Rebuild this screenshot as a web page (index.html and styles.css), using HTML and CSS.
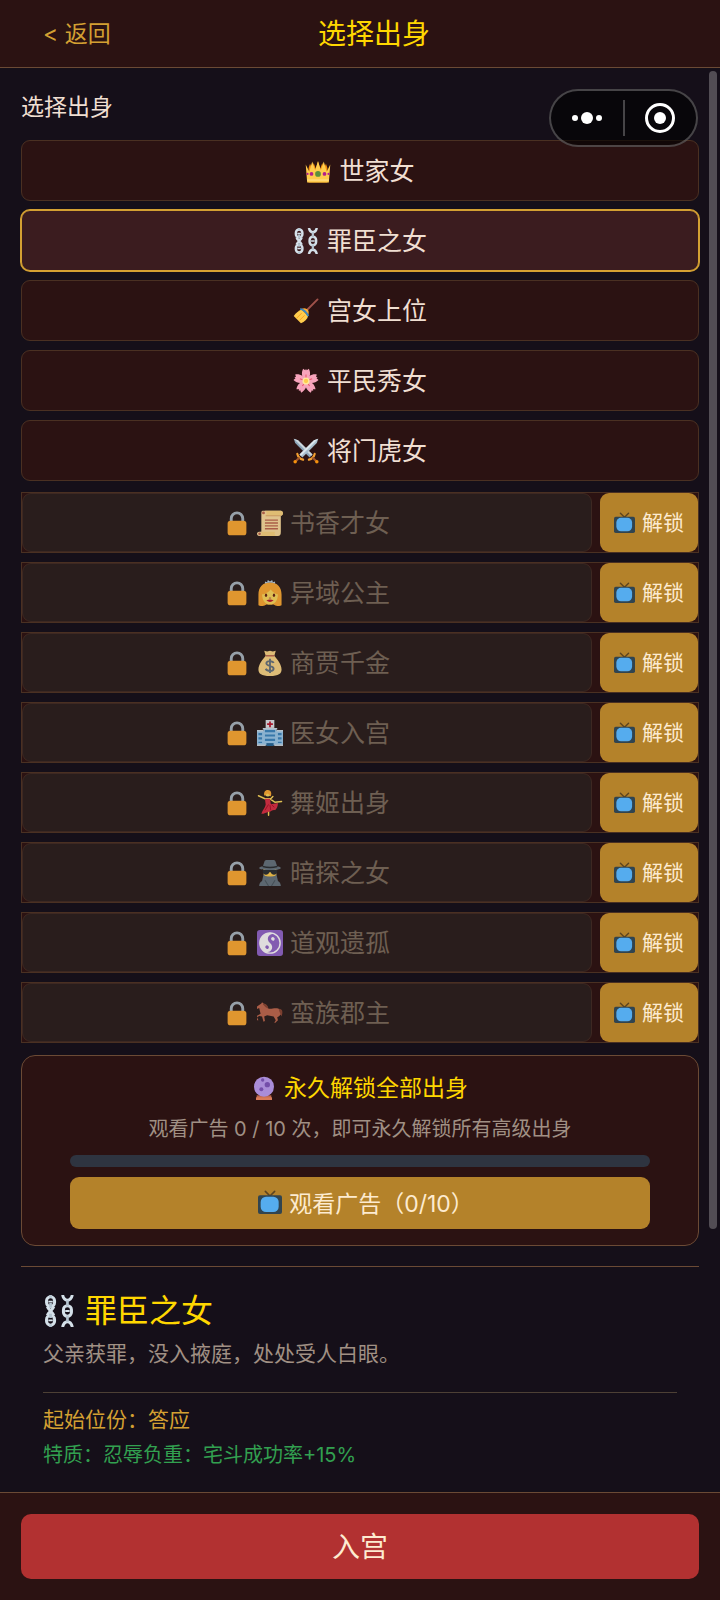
FILE: index.html
```html
<!DOCTYPE html>
<html lang="zh-CN">

<head>
  <meta charset="UTF-8" />
  <meta name="viewport" content="width=device-width, initial-scale=1" />
  <title>选择出身</title>
  <link rel="stylesheet" href="styles.css">
</head>
<body>
  <!-- icon set -->
  <svg class="sprite" aria-hidden="true">
    <symbol id="i-crown" viewBox="0 0 36 36">
      <path fill="#f4900c" d="M5 34V14l2-6 3 7 2-8 3 8 3-10 3 10 3-8 2 8 3-7 2 6v20z"/>
      <path fill="#ffcc4d" d="M3 34L1 9l5 10 4-14 4 12 4-13 4 13 4-12 4 14 5-10-2 25z"/>
      <path fill="#ffe8b6" d="M3 30h30v1H3z"/>
      <circle cx="18" cy="22" r="4" fill="#5c913b"/>
      <circle cx="9" cy="22" r="2.600" fill="#b3208c"/><circle cx="27" cy="22" r="2.600" fill="#b3208c"/>
      <circle cx="3.500" cy="22" r="1.500" fill="#b3208c"/><circle cx="32.500" cy="22" r="1.500" fill="#b3208c"/>
    </symbol>
    <symbol id="i-chains" viewBox="0 0 36 36">
      <g fill="none" stroke="#d5e1ea" stroke-width="3.400">
        <rect x="4" y="2" width="9" height="11" rx="4.500"/><rect x="4" y="23" width="9" height="11" rx="4.500"/>
        <path d="M5 13c1 4 6 6 7 10M12 13c-1 4-6 6-7 10"/>
        <rect x="23" y="12" width="9" height="12" rx="4.500"/>
        <path d="M22 0c1 4 3 6 5.500 6S32 4 33 0M22 36c1-4 3-6 5.500-6s4.500 2 5.500 6"/>
      </g>
      <path stroke="#b4c4d0" stroke-width="3" d="M8.500 0v3M8.500 9v5M8.500 21v5M8.500 33v3M27.500 6v7M27.500 23v7"/>
      <path stroke="#d5e1ea" stroke-width="2" d="M6 7.500h5M6 28.500h5M25 18h5"/>
    </symbol>
    <symbol id="i-broom" viewBox="0 0 36 36">
      <path stroke="#a0524a" stroke-width="2.600" stroke-linecap="round" d="M34 2L18 18"/>
      <path fill="#ffcc4d" d="M12 16l9 9c-1 4-5 8-10 10L1 25c3-4 7-8 11-9z"/>
      <path fill="none" stroke="#f4900c" d="M5 28l7-7M9 31l7-7"/>
      <path fill="#ffac33" d="M12 15c4-2 8 0 9 2s1 4 0 7z"/>
      <path fill="none" stroke="#3b88c3" stroke-width="2.600" d="M10 15c5 1 9 5 11 10"/>
    </symbol>
    <symbol id="i-blossom" viewBox="0 0 36 36">
      <g fill="#f7a3bb">
        <path id="petal" d="M18 18c-6-4-7-11-4-17l3 2 1-2 1 2 3-2c3 6 2 13-4 17z"/>
        <use href="#petal" transform="rotate(72 18 18)"/><use href="#petal" transform="rotate(144 18 18)"/><use href="#petal" transform="rotate(216 18 18)"/><use href="#petal" transform="rotate(288 18 18)"/>
      </g>
      <g stroke="#ea596e" stroke-width="1.500"><path d="M18 18V9M18 18l8.500-3M18 18l5 7M18 18l-5 7M18 18l-8.500-3"/></g>
      <circle cx="18" cy="18" r="5" fill="#ffe8a0"/><circle cx="18" cy="18" r="3" fill="#ffcc4d"/>
    </symbol>
    <symbol id="i-swords" viewBox="0 0 36 36">
      <path fill="#8ca5b8" d="M1 1l6 2 20 20-4 4L3 7z"/><path fill="#ccd6dd" d="M1 1l6 2 20 20-2 2z"/>
      <path fill="#a9bfcd" d="M35 1l-6 2L9 23l4 4L33 7z"/><path fill="#dce6ec" d="M35 1l-6 2L9 23l2 2z"/>
      <g fill="none" stroke="#f4a030" stroke-width="3" stroke-linecap="round"><path d="M30 22c-1 4-4 7-8 8M6 22c1 4 4 7 8 8"/></g>
      <g stroke="#a0562c" stroke-width="3"><path d="M27 27l6 6M9 27l-6 6"/></g>
      <circle cx="33" cy="33" r="2.400" fill="#f4900c"/><circle cx="3" cy="33" r="2.400" fill="#f4900c"/>
    </symbol>
    <symbol id="i-lock" viewBox="0 0 36 36">
      <path fill="none" stroke="#aab8c2" stroke-width="4" d="M10 19v-7a8 8 0 0 1 16 0v7"/>
      <rect x="5" y="15" width="26" height="20" rx="4" fill="#ffac33"/>
    </symbol>
    <symbol id="i-scroll" viewBox="0 0 36 36">
      <path fill="#ffe0a0" d="M8 1h25c3 0 4 6 0 7v22c0 4-1 6-4 6H3c-4 0-4-6 0-6h3V6c0-3 0-5 2-5z"/>
      <path fill="#ffd983" d="M11 1h22c4 0 4 7 0 7H12c2-1 2-6-1-7zM5 30h20c-1 2-1 4 1 6H4c3-1 3-4 1-6z"/>
      <path stroke="#d99e60" d="M12 8h21"/>
      <path stroke="#c1694f" stroke-width="2" d="M11 14h18M11 18h18M11 22h18M11 26h18"/>
      <circle cx="9" cy="4" r="2" fill="#c1694f"/><circle cx="3.500" cy="33" r="1.800" fill="#c1694f"/>
    </symbol>
    <symbol id="i-princess" viewBox="0 0 36 36">
      <path fill="#ffac33" d="M18 3C8 3 2 10 2 20v15c4 2 8 1 11-1h10c3 2 7 3 11 1V20C34 10 28 3 18 3z"/>
      <path fill="#ffdc5d" d="M7 19c0-4 3-6 11-8 8 2 11 4 11 8 0 9-4 15-11 15S7 28 7 19z"/>
      <path fill="#ffac33" d="M5 20c0-8 6-12 13-12s13 4 13 12c-5 0-9-3-12-7-3 4-8 7-14 7z"/>
      <path fill="#bdd6e8" d="M11 5l0-3 3 1 1-3 3 2 3-2 1 3 3-1v3c-4-2-10-2-14 0z"/>
      <ellipse cx="12.500" cy="21" rx="1.600" ry="2.400" fill="#662113"/><ellipse cx="23.500" cy="21" rx="1.600" ry="2.400" fill="#662113"/>
      <path fill="none" stroke="#c1694f" stroke-width="1.500" d="M16.500 25h3"/>
      <path fill="#be1931" d="M13 28q5-2 10 0-5 5-10 0z"/>
    </symbol>
    <symbol id="i-money" viewBox="0 0 36 36">
      <path fill="#fdd888" d="M12 8C8 13 2 20 2 27c0 6 4 9 16 9s16-3 16-9c0-7-6-14-10-19z"/>
      <path fill="#fdd888" d="M10 1l4 1 4-1 4 1 4-1-2 7H12z"/>
      <path fill="#bf6952" d="M12 7h12v2H12z"/>
      <path fill="none" stroke="#67757f" stroke-width="2.600" d="M23 18c-1-3-9-4-10 0-1 5 10 3 10 8 0 4-9 4-11 0M18 12v20"/>
    </symbol>
    <symbol id="i-hospital" viewBox="0 0 36 36">
      <path fill="#9bcdf0" d="M0 15h9v-4h18v4h9v20H0z"/>
      <path fill="#cce0ee" d="M8 11h20v2H8zM0 14h9v2H0zM27 14h9v2h-9z"/>
      <path fill="#e1e8ed" d="M12 0h12v11H12z"/>
      <path fill="#be1931" d="M16.800 2h2.400v2.500h2.800v2.500h-2.800V10h-2.400V7H14V4.500h2.800z"/>
      <path fill="#3b88c3" d="M11 14h14v3H11zM11 20h14v3H11zM11 26h14v3H11zM2 18h5v3H2zM2 24h5v3H2zM2 30h5v2H2zM29 18h5v3h-5zM29 24h5v3h-5zM29 30h5v2h-5z"/>
      <path fill="#226699" d="M13 32h10v4H13z"/><path fill="#ccd6dd" d="M0 34h12v2H0zM24 34h12v2H24z"/>
    </symbol>
    <symbol id="i-dancer" viewBox="0 0 36 36">
      <path fill="none" stroke="#ffdc5d" stroke-width="2" stroke-linecap="round" d="M2 8l9 4 8 0 3-3M19 13l6 4 9-1M16 27v8"/>
      <circle cx="15" cy="5" r="4" fill="#ffdc5d"/>
      <path fill="#ffac33" d="M10 8c-1-6 2-8 5-8 4 0 6 4 4 9l-4-4z"/>
      <path fill="#dd2e44" d="M11 12h7l1 7c4 1 7-1 10-1 0 5-2 8-4 10-4-1-6 3-9 2-3 1-6 3-10 3 2-6 5-8 6-13z"/>
      <path fill="none" stroke="#a0041e" d="M16 20l-5 8M18 21l1 7M20 20l4 4"/>
    </symbol>
    <symbol id="i-spy" viewBox="0 0 36 36">
      <path fill="#66757f" d="M3 36c0-4 2-6 4-7l2-9h18l2 9c2 1 4 3 4 7z"/>
      <path fill="#ffcc4d" d="M9 12h18v7c0 3-4 4-9 4s-9-1-9-4z"/>
      <path fill="#66757f" d="M10 22q8 3 16 0v4q-4 5-8 5t-8-5z"/>
      <path fill="#292f33" d="M8 14h20v3c0 4-8 5-9 0h-2c-1 5-9 4-9 0z"/>
      <path fill="#66757f" d="M8 9l2-6c1-4 4-3 8-3s7-1 8 3l2 6c3 0 5 1 5 2 0 4-30 4-30 0 0-1 2-2 5-2z"/>
      <path fill="#292f33" d="M8 8q10 3 20 0v2q-10 3-20 0z"/>
      <path fill="none" stroke="#4b5962" stroke-width="1.500" d="M11 28l5 8M25 28l-5 8"/>
    </symbol>
    <symbol id="i-yinyang" viewBox="0 0 36 36">
      <rect width="36" height="36" rx="4" fill="#9266cc"/>
      <circle cx="18" cy="18" r="14" fill="none" stroke="#fff" stroke-width="2"/>
      <g transform="rotate(35 18 18)">
        <path fill="#fff" d="M18 4a14 14 0 0 0 0 28 7 7 0 0 0 0-14 7 7 0 0 1 0-14z"/>
        <circle cx="18" cy="11" r="2.500" fill="#fff"/><circle cx="18" cy="25" r="2.500" fill="#9266cc"/>
      </g>
    </symbol>
    <symbol id="i-horse" viewBox="0 0 36 36">
      <path fill="#c1694f" d="M6 5l1-2 2 2c3 1 5 4 7 7 4 1 9-2 14 0 3 1 4 3 3 8l-3 3-2 1 1 4-4 4-1-1 2-3-3-5-9-2-4 2 1 6-2 1-2-7-4-1-3 2 2 4-2 0-2-5 7-4-2-8-4 2-2-2z"/>
      <path fill="#8a4633" d="M9 5c4 0 6 3 7 7l-4-2-4-4zM30 12c6 0 6 5 4 11l-3-7z"/>
    </symbol>
    <symbol id="i-crystal" viewBox="0 0 36 36">
      <path fill="#c1694f" d="M7 29h22v7H7z"/><path fill="#d97a58" d="M6 32h24v4H6z"/>
      <circle cx="18" cy="16" r="15" fill="#aa8dd8"/>
      <g fill="#744eaa"><circle cx="23" cy="13" r="4"/><circle cx="14" cy="20" r="3"/><circle cx="16" cy="6" r="2.500"/></g>
    </symbol>
    <symbol id="i-tv" viewBox="0 0 36 36">
      <path fill="none" stroke="#5c4420" stroke-width="2.400" stroke-linecap="round" d="M18 9l-7-7M18 9l7-7"/>
      <rect x="0" y="8" width="36" height="28" rx="3" fill="#31444f"/>
      <rect x="4" y="10" width="27" height="23" rx="8" fill="#55acee"/>
    </symbol>
  </svg>

  <header class="topbar">
    <button class="back-btn" type="button">&lt; 返回</button>
    <h1 class="page-title">选择出身</h1>
  </header>

  <div class="capsule">
    <button type="button" aria-label="更多">
      <svg width="32" height="12" viewBox="0 0 32 12"><g fill="#fff"><circle cx="4" cy="6" r="3"/><circle cx="16" cy="6" r="6"/><circle cx="28" cy="6" r="3"/></g></svg>
    </button>
    <button type="button" aria-label="关闭">
      <svg width="32" height="32" viewBox="0 0 32 32"><circle cx="16" cy="16" r="13.500" fill="none" stroke="#fff" stroke-width="3"/><circle cx="16" cy="16" r="6" fill="#fff"/></svg>
    </button>
  </div>

  <div class="content">
    <main class="scroll-area">
      <h2 class="section-label">选择出身</h2>

      <div class="origin-list">
        <button class="origin" type="button"><svg class="emoji"><use href="#i-crown"/></svg>世家女</button>
        <button class="origin selected" type="button" aria-pressed="true"><svg class="emoji"><use href="#i-chains"/></svg>罪臣之女</button>
        <button class="origin" type="button"><svg class="emoji"><use href="#i-broom"/></svg>宫女上位</button>
        <button class="origin" type="button"><svg class="emoji"><use href="#i-blossom"/></svg>平民秀女</button>
        <button class="origin" type="button"><svg class="emoji"><use href="#i-swords"/></svg>将门虎女</button>
      </div>

      <div class="locked-list">
        <div class="locked-row">
          <button class="origin" type="button" disabled><svg class="emoji"><use href="#i-lock"/></svg><svg class="emoji"><use href="#i-scroll"/></svg>书香才女</button>
          <button class="unlock-btn" type="button"><svg class="emoji"><use href="#i-tv"/></svg>解锁</button>
        </div>
        <div class="locked-row">
          <button class="origin" type="button" disabled><svg class="emoji"><use href="#i-lock"/></svg><svg class="emoji"><use href="#i-princess"/></svg>异域公主</button>
          <button class="unlock-btn" type="button"><svg class="emoji"><use href="#i-tv"/></svg>解锁</button>
        </div>
        <div class="locked-row">
          <button class="origin" type="button" disabled><svg class="emoji"><use href="#i-lock"/></svg><svg class="emoji"><use href="#i-money"/></svg>商贾千金</button>
          <button class="unlock-btn" type="button"><svg class="emoji"><use href="#i-tv"/></svg>解锁</button>
        </div>
        <div class="locked-row">
          <button class="origin" type="button" disabled><svg class="emoji"><use href="#i-lock"/></svg><svg class="emoji"><use href="#i-hospital"/></svg>医女入宫</button>
          <button class="unlock-btn" type="button"><svg class="emoji"><use href="#i-tv"/></svg>解锁</button>
        </div>
        <div class="locked-row">
          <button class="origin" type="button" disabled><svg class="emoji"><use href="#i-lock"/></svg><svg class="emoji"><use href="#i-dancer"/></svg>舞姬出身</button>
          <button class="unlock-btn" type="button"><svg class="emoji"><use href="#i-tv"/></svg>解锁</button>
        </div>
        <div class="locked-row">
          <button class="origin" type="button" disabled><svg class="emoji"><use href="#i-lock"/></svg><svg class="emoji"><use href="#i-spy"/></svg>暗探之女</button>
          <button class="unlock-btn" type="button"><svg class="emoji"><use href="#i-tv"/></svg>解锁</button>
        </div>
        <div class="locked-row">
          <button class="origin" type="button" disabled><svg class="emoji"><use href="#i-lock"/></svg><svg class="emoji"><use href="#i-yinyang"/></svg>道观遗孤</button>
          <button class="unlock-btn" type="button"><svg class="emoji"><use href="#i-tv"/></svg>解锁</button>
        </div>
        <div class="locked-row">
          <button class="origin" type="button" disabled><svg class="emoji"><use href="#i-lock"/></svg><svg class="emoji"><use href="#i-horse"/></svg>蛮族郡主</button>
          <button class="unlock-btn" type="button"><svg class="emoji"><use href="#i-tv"/></svg>解锁</button>
        </div>
      </div>

      <section class="unlock-all">
        <h3><svg class="emoji"><use href="#i-crystal"/></svg>永久解锁全部出身</h3>
        <p>观看广告 0 / 10 次，即可永久解锁所有高级出身</p>
        <div class="progress" role="progressbar" aria-label="解锁进度" aria-valuenow="0" aria-valuemin="0" aria-valuemax="10"></div>
        <button class="watch-btn" type="button"><svg class="emoji"><use href="#i-tv"/></svg>观看广告（0/10）</button>
      </section>

      <section class="detail">
        <h2><svg class="emoji"><use href="#i-chains"/></svg>罪臣之女</h2>
        <p class="story">父亲获罪，没入掖庭，处处受人白眼。</p>
        <div class="stats">
          <p class="rank">起始位份：答应</p>
          <p class="trait">特质：忍辱负重：宅斗成功率+15%</p>
          <p class="attrs">初始属性：</p>
        </div>
      </section>
    </main>
    <div class="scroll-thumb"></div>
  </div>

  <footer class="bottom-bar">
    <button class="enter-btn" type="button">入宫</button>
  </footer>
</body>
</html>
```
FILE: styles.css
```css
:root {
  --bg: #150f19;
  --panel: #2b1212;
  --line: #6b4a35;
  --row-line: #4a3022;
  --gold: #d4a032;
  --bright: #ffd700;
  --btn-gold: #b4822a;
  --text: #f0dfd2;
  --muted: #a09084;
}

* {
  box-sizing: border-box;
}

body {
  margin: 0;
  height: 100vh;
  display: flex;
  flex-direction: column;
  background-color: var(--bg);
  color: var(--text);
  font-family: Inter, "Noto Sans CJK SC", sans-serif;
}

h1, h2, h3, p {
  margin: 0;
  font-weight: 400;
}

button {
  margin: 0;
  padding: 0;
  border: none;
  background: none;
  color: inherit;
  font-family: inherit;
  cursor: pointer;
}

.sprite {
  position: absolute;
  width: 0;
  height: 0;
}

.emoji {
  width: 26px;
  height: 26px;
  flex: none;
}

/* header */
.topbar {
  flex: none;
  height: 68px;
  display: flex;
  align-items: center;
  padding: 0 21px;
  background-color: var(--panel);
  border-bottom: 1px solid var(--line);
}

.back-btn {
  width: 110px;
  padding-left: 22px;
  text-align: left;
  font-size: 23px;
  line-height: 40px;
  color: var(--gold);
}

.page-title {
  flex: 1;
  padding-right: 82px;
  text-align: center;
  font-size: 28px;
  line-height: 40px;
  color: var(--bright);
}

/* mini program capsule, floats over the page */
.capsule {
  position: fixed;
  top: 89px;
  right: 22px;
  z-index: 5;
  width: 149px;
  height: 58px;
  display: flex;
  align-items: center;
  background-color: rgba(0, 0, 0, 0.6);
  border: 2px solid rgba(255, 255, 255, 0.25);
  border-radius: 29px;
}

.capsule button {
  flex: 1;
  height: 36px;
  display: flex;
  align-items: center;
  justify-content: center;
}

.capsule button + button {
  border-left: 2px solid rgba(255, 255, 255, 0.25);
}

/* scrolling content */
.content {
  flex: 1;
  min-height: 0;
  position: relative;
}

.scroll-area {
  height: 100%;
  overflow-y: auto;
  scrollbar-width: none;
  padding: 21px;
}

.scroll-thumb {
  position: absolute;
  top: 3px;
  right: 3px;
  width: 8px;
  height: calc(81% + 5px);
  border-radius: 4px;
  background-color: #524d54;
}

.section-label {
  font-size: 23px;
  line-height: 36px;
  margin-bottom: 15px;
}

.origin-list {
  display: flex;
  flex-direction: column;
  gap: 9px;
}

.origin {
  height: 61px;
  display: flex;
  align-items: center;
  justify-content: center;
  gap: 8px;
  padding-bottom: 3px;
  font-size: 25px;
  background-color: var(--panel);
  border: 1px solid var(--row-line);
  border-radius: 9px;
}

.origin .emoji {
  margin-top: 3px;
}

.origin.selected {
  background-color: #3b1c1f;
  border-color: var(--gold);
  box-shadow: 0 0 0 1px var(--gold);
}

.locked-list {
  display: flex;
  flex-direction: column;
  gap: 9px;
  margin: 11px 0 12px;
}

.locked-row {
  display: flex;
  gap: 8px;
  height: 61px;
  background-color: var(--panel);
  border: 1px solid var(--row-line);
}

.locked-row .origin {
  flex: 1;
  height: 100%;
  gap: 7px;
  color: #6e5f52;
  background-color: #291d1c;
  border-color: #3d2822;
  cursor: default;
}

.locked-row .origin .emoji {
  opacity: 0.85;
}

.unlock-btn {
  width: 98px;
  display: flex;
  align-items: center;
  justify-content: center;
  gap: 7px;
  padding-bottom: 3px;
  font-size: 21px;
  color: #fdebd0;
  background-color: var(--btn-gold);
  border-radius: 9px;
}

.unlock-btn .emoji {
  width: 21px;
  height: 21px;
  margin-top: 3px;
}

/* unlock everything card */
.unlock-all {
  display: flex;
  flex-direction: column;
  gap: 10px;
  padding: 16px 48px;
  text-align: center;
  background-color: var(--panel);
  border: 1px solid var(--line);
  border-radius: 14px;
}

.unlock-all h3 {
  display: flex;
  align-items: center;
  justify-content: center;
  gap: 8px;
  font-size: 23px;
  line-height: 32px;
  color: var(--bright);
}

.unlock-all .emoji {
  width: 24px;
  height: 24px;
}

.unlock-all p {
  font-size: 20px;
  line-height: 31px;
  color: var(--muted);
}

.progress {
  height: 12px;
  border-radius: 6px;
  background-color: #2e3440;
}

.watch-btn {
  height: 52px;
  display: flex;
  align-items: center;
  justify-content: center;
  gap: 7px;
  padding: 0 0 2px 12px;
  font-size: 23px;
  color: #fdebd0;
  background-color: var(--btn-gold);
  border-radius: 9px;
}

/* selected origin */
.detail {
  margin-top: 20px;
  padding: 22px 22px 0;
  border-top: 1px solid var(--line);
}

.detail h2 {
  display: flex;
  align-items: center;
  gap: 10px;
  font-size: 32px;
  line-height: 44px;
  color: var(--bright);
}

.detail h2 .emoji {
  width: 32px;
  height: 32px;
}

.story {
  margin-top: 5px;
  font-size: 21px;
  line-height: 32px;
  color: var(--muted);
}

.stats {
  margin-top: 22px;
  padding-top: 10px;
  border-top: 1px solid #4d4035;
  line-height: 34px;
}

.rank {
  font-size: 21px;
  color: var(--gold);
}

.trait {
  margin-top: 1px;
  font-size: 20px;
  color: #32a050;
}

.attrs {
  margin-top: 15px;
  font-size: 20px;
  color: var(--muted);
}

/* footer */
.bottom-bar {
  flex: none;
  padding: 21px;
  background-color: var(--panel);
  border-top: 1px solid var(--line);
}

.enter-btn {
  display: block;
  width: 100%;
  height: 65px;
  padding-bottom: 4px;
  font-size: 28px;
  color: #fdebd0;
  background-color: #b23131;
  border-radius: 10px;
}
```
